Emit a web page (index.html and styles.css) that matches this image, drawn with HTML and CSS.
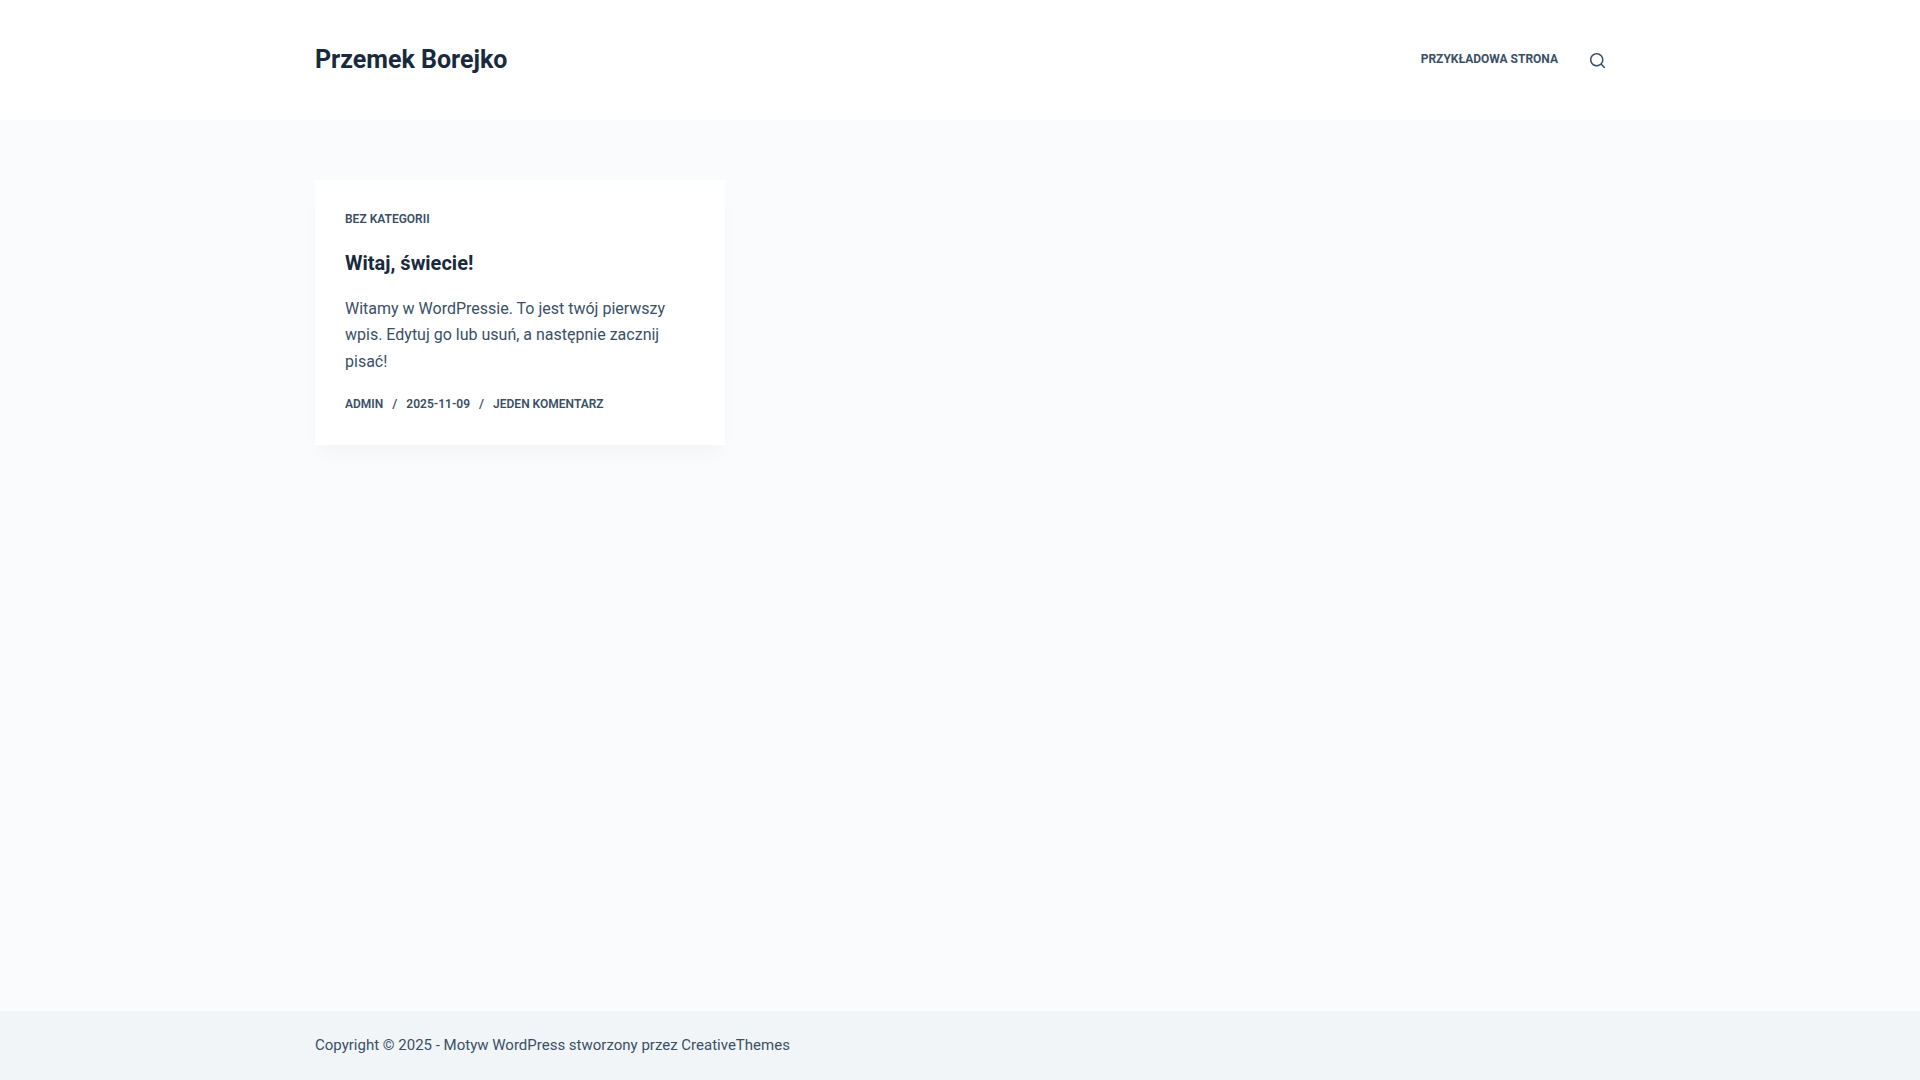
FILE: index.html
```html
<!DOCTYPE html>
<html lang="pl">
<head>
    <meta charset="UTF-8">
    <meta name="viewport" content="width=device-width, initial-scale=1">
    <title>Przemek Borejko</title>
    <link rel="stylesheet" href="styles.css">
</head>
<body>

    <header class="site-header">
        <div class="container header-row">
            <a href="#" class="site-title">Przemek Borejko</a>
            <div class="header-end">
                <nav class="menu">
                    <a href="#">Przykładowa strona</a>
                </nav>
                <button class="search-toggle" aria-label="Szukaj">
                    <svg width="15" height="15" viewBox="0 0 15 15" fill="currentColor" aria-hidden="true">
                        <path d="M14.8,13.7L12,11c0.9-1.2,1.5-2.6,1.5-4.2c0-3.7-3-6.8-6.8-6.8S0,3,0,6.8s3,6.8,6.8,6.8c1.6,0,3.1-0.6,4.2-1.5l2.8,2.8c0.1,0.1,0.3,0.2,0.5,0.2s0.4-0.1,0.5-0.2C15.1,14.5,15.1,14,14.8,13.7z M1.5,6.8c0-2.9,2.4-5.2,5.2-5.2S12,3.9,12,6.8S9.6,12,6.8,12S1.5,9.6,1.5,6.8z"/>
                    </svg>
                </button>
            </div>
        </div>
    </header>

    <main class="site-main">
        <div class="container entries">
            <article class="entry-card">
                <div class="entry-meta">
                    <a href="#">Bez kategorii</a>
                </div>
                <h2 class="entry-title"><a href="#">Witaj, świecie!</a></h2>
                <p class="entry-excerpt">Witamy w WordPressie. To jest twój pierwszy wpis. Edytuj go lub usuń, a następnie zacznij pisać!</p>
                <ul class="entry-meta">
                    <li><a href="#">admin</a></li>
                    <li><time datetime="2025-11-09">2025-11-09</time></li>
                    <li><a href="#">Jeden komentarz</a></li>
                </ul>
            </article>
        </div>
    </main>

    <footer class="site-footer">
        <div class="container">
            <p>Copyright © 2025 - Motyw WordPress stworzony przez <a href="#">CreativeThemes</a></p>
        </div>
    </footer>

</body>
</html>
```
FILE: styles.css
```css
* {
    box-sizing: border-box;
}

body {
    display: flex;
    flex-direction: column;
    min-height: 100vh;
    margin: 0;
    font-family: Roboto, sans-serif;
    font-size: 16px;
    line-height: 1.65;
    color: #3a4f66;
    background-color: #fafbfc;
}

a {
    color: inherit;
    text-decoration: none;
}

a:hover {
    color: #2872fa;
}

.container {
    width: 88%;
    max-width: 1290px;
    margin: 0 auto;
}

/* Header */
.site-header {
    background-color: #ffffff;
}

.header-row {
    display: flex;
    align-items: center;
    justify-content: space-between;
    min-height: 120px;
}

.site-title {
    font-size: 25px;
    font-weight: 700;
    line-height: 1.5;
    color: #192a3d;
}

.header-end {
    display: flex;
    align-items: center;
    gap: 32px;
}

.menu {
    display: flex;
    padding-bottom: 2px;
    font-size: 12px;
    font-weight: 700;
    line-height: 16px;
    text-transform: uppercase;
}

.search-toggle {
    display: flex;
    padding: 0;
    border: none;
    background: none;
    color: inherit;
    cursor: pointer;
}

/* Posts */
.site-main {
    flex: 1;
    padding: 60px 0;
}

.entries {
    display: grid;
    grid-template-columns: repeat(3, 1fr);
    gap: 30px;
}

.entry-card {
    padding: 30px 30px 32px;
    background-color: #ffffff;
    box-shadow: 0 12px 18px -6px rgba(34, 56, 101, 0.04);
}

.entry-meta {
    display: flex;
    margin: 0;
    padding: 0;
    list-style: none;
    font-size: 12px;
    font-weight: 600;
    line-height: 18px;
    text-transform: uppercase;
}

.entry-meta li + li::before {
    content: "/";
    margin: 0 9px;
    font-size: 13px;
    font-weight: 500;
}

.entry-title {
    margin: 22px 0 20px;
    font-size: 20px;
    font-weight: 700;
    line-height: 1.3;
    color: #192a3d;
}

.entry-excerpt {
    margin: 0 0 20px;
}

/* Footer */
.site-footer {
    padding: 22px 0;
    background-color: #f2f5f7;
    font-size: 15px;
}

.site-footer p {
    margin: 0;
}
```
